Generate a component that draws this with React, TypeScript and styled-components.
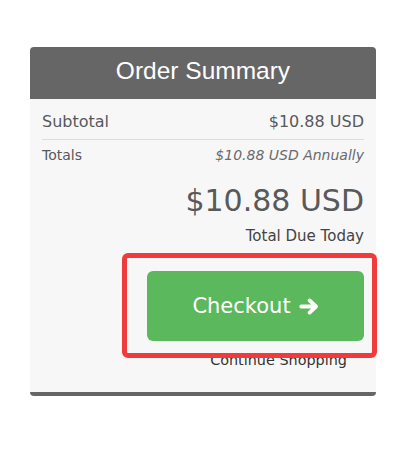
import React from "react";
import styled, { createGlobalStyle } from "styled-components";

const GlobalStyle = createGlobalStyle`
  html, body {
    margin: 0;
    padding: 0;
    background: #ffffff;
  }
  body {
    font-family: "DejaVu Sans", "Liberation Sans", sans-serif;
  }
`;

const Page = styled.div`
  padding: 47px 0 0 30px;
`;

const Card = styled.div`
  position: relative;
  width: 346px;
  border-radius: 4px;
`;

const Header = styled.div`
  background: #666666;
  border-radius: 4px 4px 0 0;
  padding: 10px 0 14px;
  text-align: center;
  font-family: "Liberation Sans", Arial, sans-serif;
  font-size: 24.5px;
  line-height: 28px;
  color: #ffffff;
`;

const Body = styled.div`
  background: #f7f7f7;
  border-bottom: 4px solid #666666;
  border-radius: 0 0 4px 4px;
  padding: 0 12px 23px;
  display: flex;
  flex-direction: column;
`;

const Row = styled.div<{ $first?: boolean }>`
  display: flex;
  justify-content: space-between;
  align-items: baseline;
  color: #58595b;
  font-size: ${(p) => (p.$first ? "16px" : "14px")};
  line-height: ${(p) => (p.$first ? "20px" : "18px")};
  padding: ${(p) => (p.$first ? "13px 0 7px" : "6px 0 0")};
  border-bottom: ${(p) => (p.$first ? "1px solid #dddddd" : "none")};
`;

const Cycle = styled.span`
  font-style: italic;
  color: #6a6a6a;
`;

const Total = styled.div`
  margin-top: 19px;
  text-align: right;
  font-size: 30px;
  line-height: 36px;
  color: #58595b;
`;

const DueLabel = styled.div`
  margin-top: 8px;
  text-align: right;
  font-size: 15px;
  line-height: 18px;
  color: #444444;
`;

const CheckoutButton = styled.button`
  align-self: flex-end;
  margin-top: 26px;
  width: 217px;
  height: 70px;
  border: none;
  border-radius: 6px;
  background: #5cb85c;
  color: #ffffff;
  font-family: "DejaVu Sans", sans-serif;
  font-size: 21px;
  display: flex;
  align-items: center;
  justify-content: center;
  gap: 8px;
  padding: 0;
  cursor: pointer;
`;

const ContinueLink = styled.a`
  align-self: flex-end;
  margin: 10px 17px 0 0;
  font-size: 14.4px;
  line-height: 18px;
  color: #333333;
  text-decoration: none;
`;

const Highlight = styled.div`
  position: absolute;
  left: 92px;
  top: 206px;
  width: 255px;
  height: 105px;
  box-sizing: border-box;
  border: 5px solid #ef3b3b;
  border-radius: 6px;
  pointer-events: none;
`;

const Arrow = () => (
  <svg width="20" height="17" viewBox="0 0 20 17" fill="none">
    <path
      d="M2.2 8.5H16.5M10.6 2.4L17 8.5L10.6 14.6"
      stroke="#ffffff"
      strokeWidth="3.8"
      strokeLinecap="round"
      strokeLinejoin="round"
    />
  </svg>
);

export default function App() {
  return (
    <Page>
      <GlobalStyle />
      <Card>
        <Header>Order Summary</Header>
        <Body>
          <Row $first>
            <span>Subtotal</span>
            <span>$10.88 USD</span>
          </Row>
          <Row>
            <span>Totals</span>
            <Cycle>$10.88 USD Annually</Cycle>
          </Row>
          <Total>$10.88 USD</Total>
          <DueLabel>Total Due Today</DueLabel>
          <CheckoutButton>
            Checkout
            <Arrow />
          </CheckoutButton>
          <ContinueLink href="#">Continue Shopping</ContinueLink>
        </Body>
        <Highlight />
      </Card>
    </Page>
  );
}
